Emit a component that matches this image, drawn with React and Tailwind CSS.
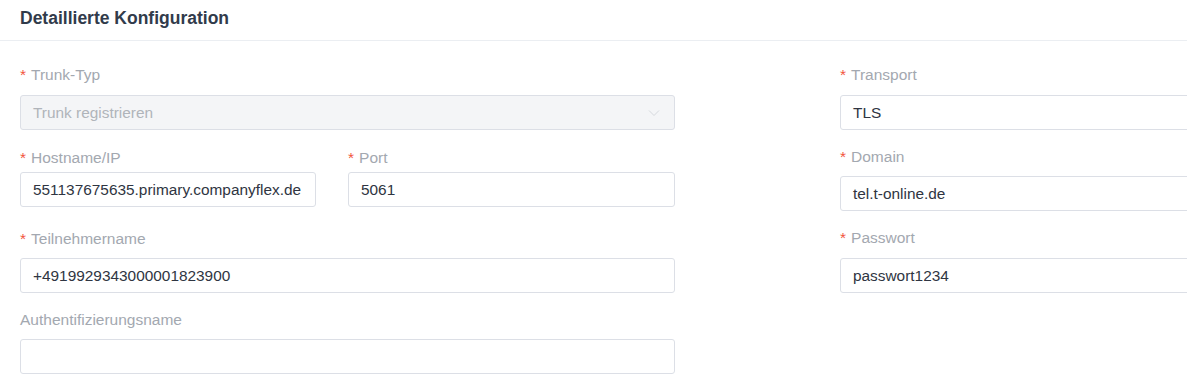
import { useState } from "react";

const Label = ({ text, required, className = "mb-[10px]" }) => (
  <div className={`h-5 leading-5 text-[15.5px] text-[#a3a8b0] whitespace-nowrap ${className}`}>
    {required && <span className="text-[#f2553d] mr-[5px]">*</span>}
    {text}
  </div>
);

const Input = ({ value, className = "" }) => (
  <div className={`h-[35px] border border-[#dcdfe6] rounded-[3px] bg-white px-[12px] flex items-center text-[15.4px] text-[#2f3542] whitespace-nowrap overflow-hidden ${className}`}>
    {value}
  </div>
);

const Field = ({ label, required, value, className = "", labelClass }) => (
  <div className={className}>
    <Label text={label} required={required} className={labelClass} />
    <Input value={value} />
  </div>
);

export default function App() {
  const [form] = useState({
    host: "551137675635.primary.companyflex.de",
    port: "5061",
    user: "+4919929343000001823900",
    auth: "",
    transport: "TLS",
    domain: "tel.t-online.de",
    password: "passwort1234",
  });

  return (
    <div className="w-[1187px] h-[384px] overflow-hidden bg-white" style={{ fontFamily: '"Liberation Sans", Arial, sans-serif' }}>
      <div className="h-[41px] border-b border-[#ebeef2] px-5 flex items-center">
        <h2 className="text-[17.5px] font-bold text-[#313b4b] -mt-[3px]">Detaillierte Konfiguration</h2>
      </div>
      <div className="flex pl-5 pt-[24px]">
        <div className="w-[655px] shrink-0">
          <div>
            <Label text="Trunk-Typ" required />
            <div className="h-[35px] border border-[#dcdfe6] rounded-[3px] bg-[#f4f5f7] pl-[12px] pr-[14px] flex items-center justify-between text-[15.4px] text-[#b0b4ba]">
              <span>Trunk registrieren</span>
              <svg width="12" height="8" viewBox="0 0 12 8" fill="none" stroke="#d6d9de" strokeWidth="1">
                <path d="M1 1.5 6 6.5 11 1.5" />
              </svg>
            </div>
          </div>
          <div className="flex gap-[32px] mt-[18px]">
            <Field className="w-[296px]" labelClass="mb-[4px]" label="Hostname/IP" required value={form.host} />
            <Field className="w-[327px]" labelClass="mb-[4px]" label="Port" required value={form.port} />
          </div>
          <Field className="mt-[22px]" labelClass="mb-[9px]" label="Teilnehmername" required value={form.user} />
          <Field className="mt-[17px]" labelClass="mb-[9px]" label="Authentifizierungsname" value={form.auth} />
        </div>
        <div className="w-[655px] shrink-0 ml-[165px]">
          <Field label="Transport" required value={form.transport} />
          <Field className="mt-[17px]" labelClass="mb-[9px]" label="Domain" required value={form.domain} />
          <Field className="mt-[17px]" labelClass="mb-[10px]" label="Passwort" required value={form.password} />
        </div>
      </div>
    </div>
  );
}
